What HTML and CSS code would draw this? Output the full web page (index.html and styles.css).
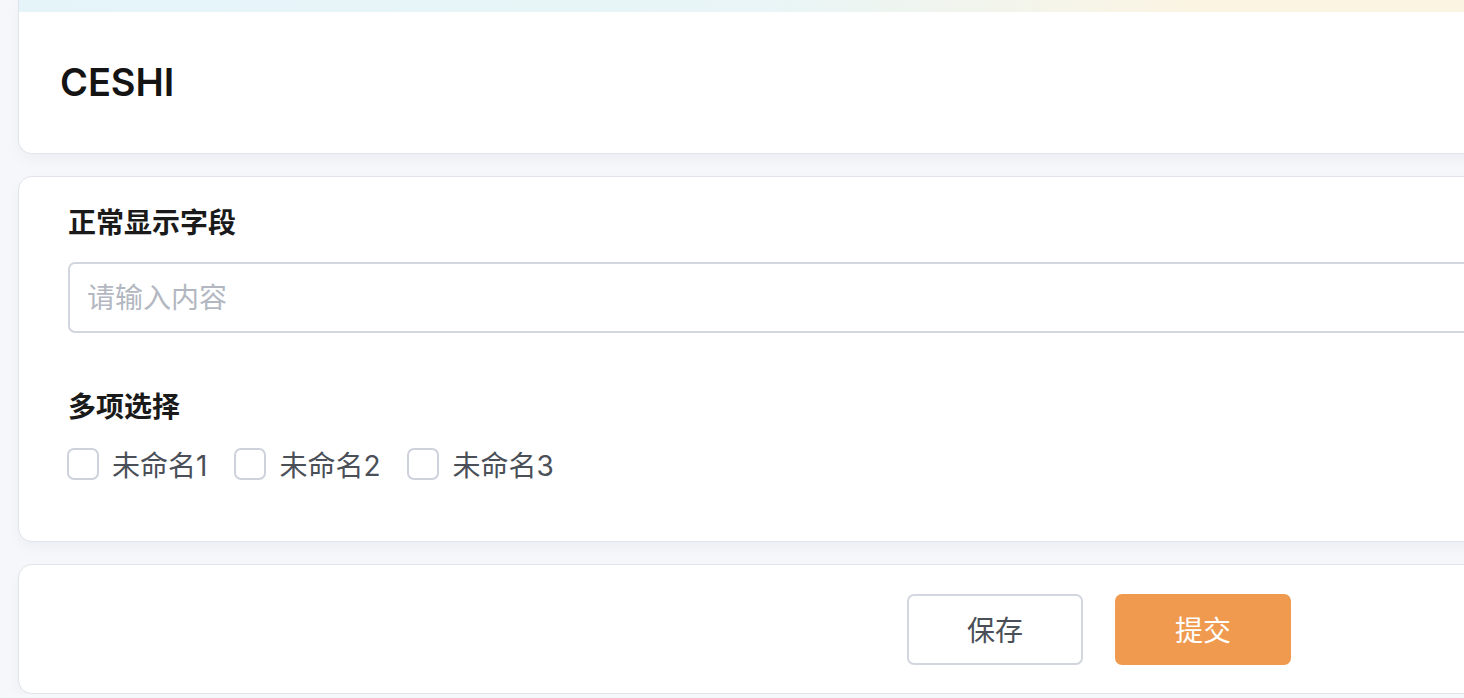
FILE: index.html
```html
<!DOCTYPE html>
<html lang="zh">
<head>
<meta charset="utf-8">
<title>CESHI</title>
<link rel="stylesheet" href="styles.css">
</head>
<body>
<div class="page">
  <section class="card head">
    <div class="head-strip"></div>
    <div class="head-body"><h1 class="title">CESHI</h1></div>
  </section>
  <section class="card form">
    <div class="field">
      <label class="label">正常显示字段</label>
      <input class="input" type="text" placeholder="请输入内容">
    </div>
    <div class="field field-check">
      <div class="label">多项选择</div>
      <div class="checks">
        <label class="check"><span class="box"></span><span class="check-text">未命名1</span></label>
        <label class="check"><span class="box"></span><span class="check-text">未命名2</span></label>
        <label class="check"><span class="box"></span><span class="check-text">未命名3</span></label>
      </div>
    </div>
  </section>
  <section class="card actions">
    <button class="btn btn-plain" type="button">保存</button>
    <button class="btn btn-primary" type="button">提交</button>
  </section>
</div>
</body>
</html>
```

FILE: styles.css
```css
* { box-sizing: border-box; }
html, body { margin: 0; padding: 0; }
body {
  background: #f6f7fa;
  overflow: hidden;
  font-family: "Inter", "Noto Sans CJK SC", sans-serif;
  color: #1a1a1a;
}
.page {
  width: 2180px;
  padding-left: 18px;
  display: flex;
  flex-direction: column;
  gap: 22px;
}
.card {
  background: #fff;
  border: 1px solid #e2e4eb;
  border-radius: 14px;
  box-shadow: 0 6px 14px rgba(30, 40, 80, 0.035);
}
.head {
  height: 154px;
  border-top: none;
  border-radius: 0 0 14px 14px;
  overflow: hidden;
  display: flex;
  flex-direction: column;
}
.head-strip {
  height: 12px;
  background: linear-gradient(90deg, #e4f4f9 0%, #e9f5f6 35%, #fbf4e2 55%, #f9f5e6 100%);
}
.head-body {
  flex: 1;
  display: flex;
  align-items: center;
  padding-left: 41px;
  padding-bottom: 2px;
}
.title {
  margin: 0;
  font-size: 38px;
  font-weight: 600;
  letter-spacing: -0.1px;
  color: #141414;
}
.form {
  padding: 28px 0 61px 49px;
  display: flex;
  flex-direction: column;
  gap: 56px;
}
.field {
  display: flex;
  flex-direction: column;
  gap: 21px;
}
.field-check { gap: 23px; }
.label {
  font-size: 28px;
  line-height: 36px;
  font-weight: 700;
  color: #1a1a1a;
}
.input {
  height: 71px;
  width: 2100px;
  border: 2px solid #d2d6df;
  border-radius: 7px;
  padding: 0 17px;
  font-family: inherit;
  font-size: 28px;
  color: #333;
  outline: none;
}
.input::placeholder { color: #b2b7c1; }
.checks {
  display: flex;
  gap: 27px;
  margin-left: -1px;
}
.check {
  display: flex;
  align-items: center;
  gap: 13px;
  height: 32px;
}
.box {
  width: 32px;
  height: 32px;
  border: 2px solid #cdd2dd;
  border-radius: 7px;
  background: #fff;
}
.check-text {
  font-size: 28px;
  color: #4a4f58;
}
.actions {
  height: 130px;
  display: flex;
  justify-content: center;
  align-items: center;
  gap: 32px;
}
.btn {
  width: 176px;
  height: 71px;
  border-radius: 7px;
  font-family: inherit;
  font-size: 28px;
  cursor: pointer;
}
.btn-plain {
  background: #fff;
  border: 2px solid #d2d6df;
  color: #4a4f58;
}
.btn-primary {
  background: #ef9a4f;
  border: 2px solid #ef9a4f;
  color: #fff;
}
```
